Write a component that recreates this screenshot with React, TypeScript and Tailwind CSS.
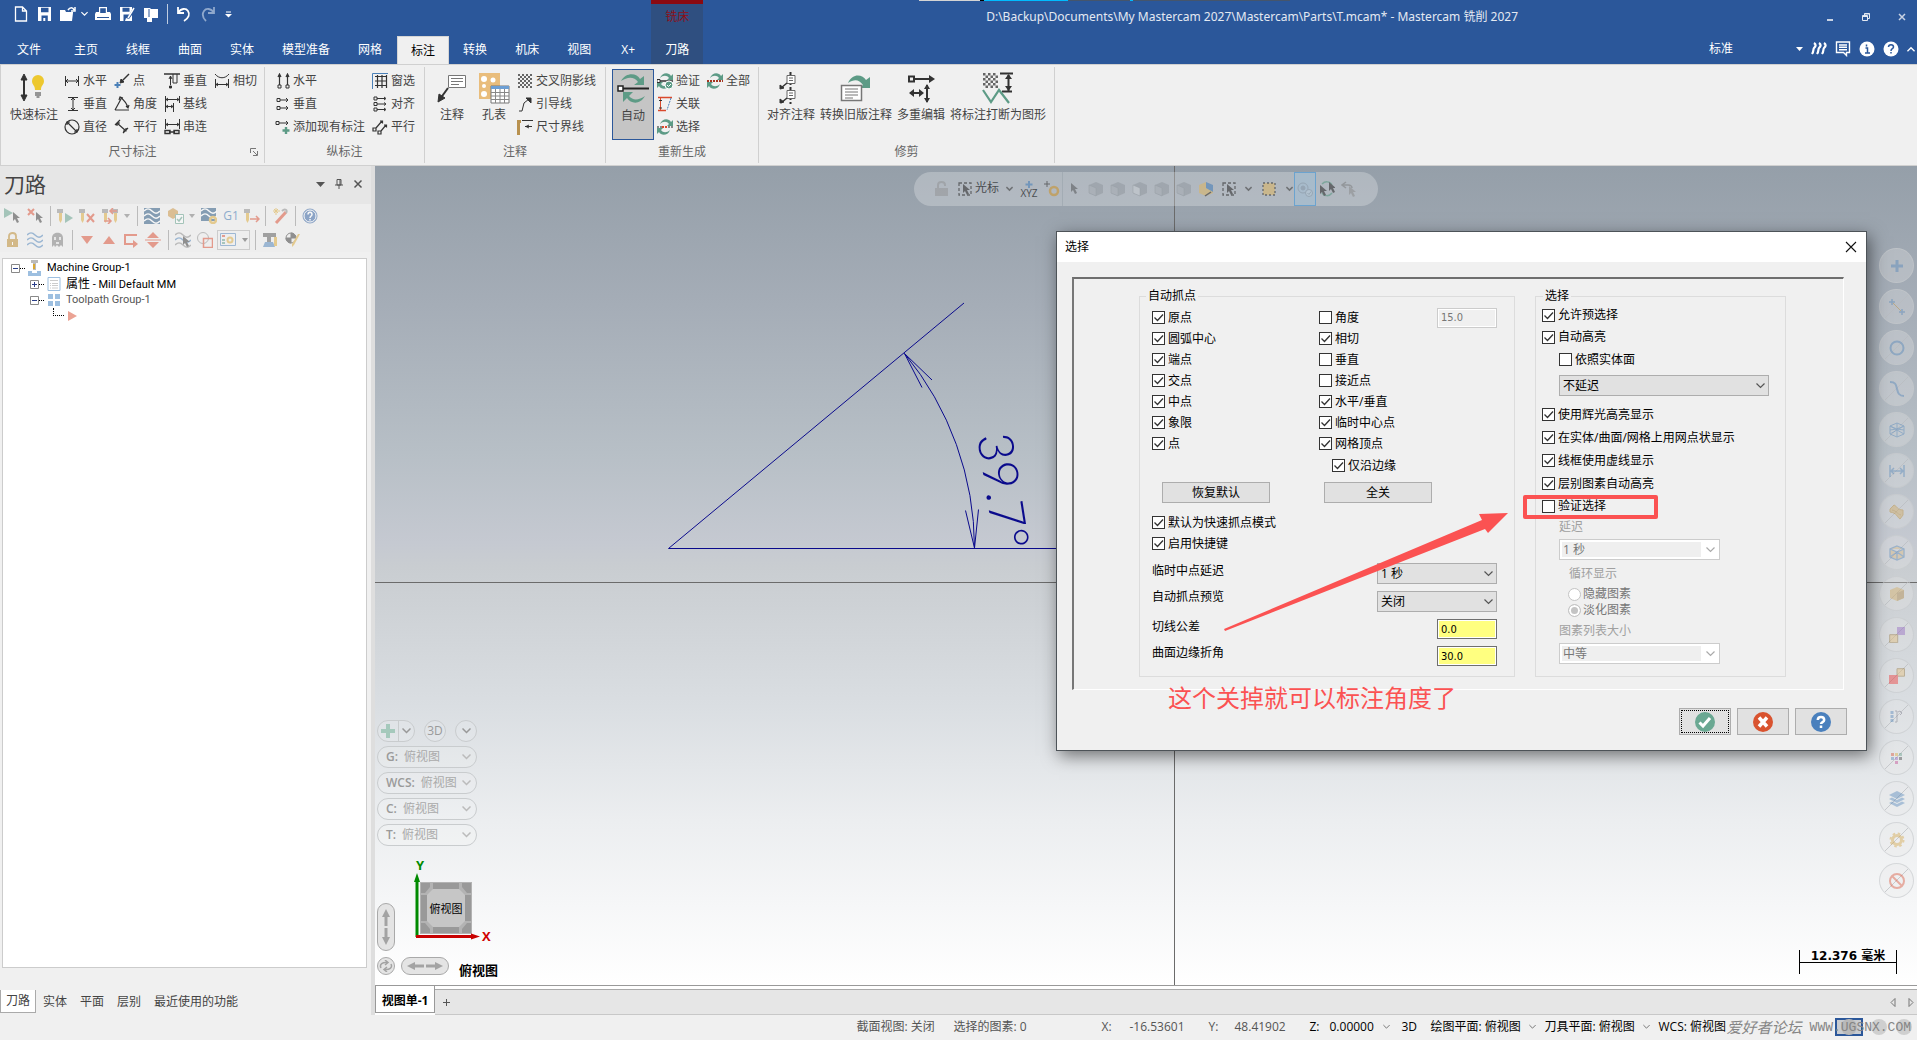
import React from 'react';

const K = '#333333';
const G = '#5d9b86';
const B = '#4a80b8';
const R = '#d9492c';
const T = '#e9bd7c';

type Kids = { children?: React.ReactNode };

function S({ w = 16, h = 16, s = K, sw = 1, className = '', children }: Kids & { w?: number; h?: number; s?: string; sw?: number; className?: string }) {
  return (
    <svg width={w} height={h} viewBox={`0 0 ${w} ${h}`} fill="none" stroke={s} strokeWidth={sw} className={'shrink-0 ' + className} aria-hidden="true">
      {children}
    </svg>
  );
}

function Chevron({ s = '#555', sw = 1, className = '' }: { s?: string; sw?: number; className?: string }) {
  return (
    <S w={9} h={6} s={s} sw={sw} className={className}>
      <path d="M.5 .5 4.5 4.5 8.500 .5" />
    </S>
  );
}

/* ---------- title bar ---------- */

function QuickAccess() {
  return (
    <div className="flex h-7 w-[240px] items-center pl-[9px]">
      <button className="flex w-6 justify-center" aria-label="新建"><S s="#fff" sw={1.3}><path d="M2.500 1h7L13.500 5v10h-11zM9.500 1v4h4" /></S></button>
      <button className="flex w-6 justify-center" aria-label="保存"><S s="none"><path fill="#fff" fillRule="evenodd" d="M1 1h13v14H1zM4 1.800v4.400h7.500V1.800zM4.500 9.500V15h1.800v-3h2v3h2.500V9.500z" /></S></button>
      <button className="flex w-[34px] items-center justify-center gap-1" aria-label="打开">
        <S w={17} s="none"><path fill="#fff" d="M0 4h5l1 2h7v1l-1 8H0z" /><path d="M8 4c2-3 5-3 6 0M15 1v4h-4" stroke="#fff" strokeWidth="1.500" /></S>
        <Chevron s="#fff" sw={1.500} className="w-[7px]" />
      </button>
      <button className="flex w-[24px] justify-center" aria-label="打印"><S s="none"><path fill="#fff" fillRule="evenodd" d="M4 1h8v5h3l1 2v6H0V8l1-2h3zM5.200 2.200V7h5.600V2.200zM2 11v1h12v-1z" /></S></button>
      <button className="flex w-6 justify-center" aria-label="另存为"><S s="none"><path fill="#fff" fillRule="evenodd" d="M1 1h12v3l-3 5v-.5H4.500V15H1zM3.500 1.800v4h7v-4zM7 12l-1 3h7V9l-3 4z" /><path d="m15 2-6 10" stroke="#fff" strokeWidth="1.500" /></S></button>
      <button className="flex w-6 justify-center" aria-label="压缩"><S s="none"><path fill="#fff" d="M1 2h6l1 1h7v9H9v4H4v-4H1z" /><path d="M5 4h2M5 6h2M5 8h2M5 10h2" stroke="#2b579a" /></S></button>
      <span className="mx-1 h-5 w-px bg-white/70" />
      <button className="flex w-6 justify-center" aria-label="撤消"><S s="#fff" sw={1.800}><path d="M2 1v6h6M2 7c3-5 8-5 10-2s1 7-4 10" /></S></button>
      <button className="flex w-6 justify-center" aria-label="重做"><S s="#8fa8cc" sw={1.800}><path d="M14 1v6H8M14 7C11 2 6 2 4 5s-1 7 2 10" /></S></button>
      <button className="flex w-4 justify-center" aria-label="自定义"><S w={7} h={7} s="#fff"><path d="M1 1h5" /><path d="M0 3h7L3.500 6.500z" fill="#fff" stroke="none" /></S></button>
    </div>
  );
}

function Header() {
  return (
    <header className="relative flex h-16 shrink-0 items-stretch bg-[#2b579a] text-white">
      <div className="absolute left-[919px] top-0 flex h-px w-[371px]">
        <span className="w-[61px] bg-neutral-300" /><span className="w-1 bg-black" /><span className="w-[84px] bg-sky-400" /><span className="w-[62px] bg-slate-600" /><span className="w-[3px] bg-sky-400" /><span className="flex-1 bg-slate-600" />
      </div>
      <div className="flex flex-col justify-between">
        <QuickAccess />
        <nav className="flex h-7 items-stretch">
          <button className="w-[60px] pr-[2px]">文件</button>
          {['主页', '线框', '曲面', '实体', '模型准备', '网格'].map((t) => <button key={t} className="px-[14px]">{t}</button>)}
          <button className="ml-px border border-b-0 border-[#d5d5d5] bg-[#f0f0f0] px-[13px] text-black">标注</button>
          {['转换', '机床', '视图'].map((t) => <button key={t} className="px-[14px]">{t}</button>)}
          <button className="w-[46px]">X+</button>
        </nav>
      </div>
      <div className="flex w-[52px] flex-col items-center justify-between border-t-4 border-[#8b0a10] bg-[#2f4f80]">
        <span className="pt-1 leading-[18px] text-[#8b0f18]">铣床</span>
        <button className="h-7">刀路</button>
      </div>
      <div className="flex-1 whitespace-pre pl-[283px] pt-2 font-[Noto_Sans,Noto_Sans_CJK_SC] leading-[18px] text-[#e4e9f2]">D:\Backup\Documents\My Mastercam 2027\Mastercam\Parts\T.mcam* - Mastercam 铣削 2027</div>
      <div className="flex flex-col justify-between">
        <div className="flex h-[34px] items-center justify-end gap-6 pr-[9px]">
          <button aria-label="最小化"><S w={12} h={12} s="#c9d3e4" sw={2}><path d="M3 9h6" /></S></button>
          <button aria-label="还原"><S w={12} h={12} s="#e4e9f2"><path d="M2.500 4.500h5v5h-5zM2.500 5.500h5M4.500 4V2.500h5v5H8M4.500 3h5" /></S></button>
          <button aria-label="关闭"><S w={12} h={12} s="#c9d3e4" sw={1.500}><path d="m3 3 6 6m0-6-6 6" /></S></button>
        </div>
        <div className="flex h-[30px] items-center pr-[2px]">
          <select aria-label="样式" className="w-[84px] appearance-none bg-transparent"><option>标准</option></select>
          <S w={7} h={4} s="none" className="ml-[3px] mr-[8px]"><path fill="#fff" d="M0 0h7L3.500 4z" /></S>
          <button className="w-6" aria-label="社区"><S s="#fff" sw={2.200}><path d="M3 2c3 2 1 4 0 5s0 3-2 6M8 2c3 2 1 4 0 5s0 3-2 6M13 2c3 2 1 4 0 5s0 3-2 6" /></S></button>
          <button className="w-6" aria-label="消息"><S s="#fff" sw={1.400}><path d="M1.500 1h13v10.500h-3v3l-3-3h-7zM4 4h8M4 6.300h8M4 8.700h8" /></S></button>
          <button className="w-6" aria-label="信息"><S><circle cx="8" cy="8" r="7.500" fill="#fff" stroke="none" /><path d="M6.500 7H8.500V12M6 12h5M7.500 3.500v2" stroke="#2b579a" strokeWidth="1.500" /></S></button>
          <button className="w-6" aria-label="帮助"><S><circle cx="8" cy="8" r="7.500" fill="#fff" stroke="none" /><path d="M5.500 6c0-3 5-3 5 0 0 2-2.500 1.500-2.500 4M8 11v1.500" stroke="#2b579a" strokeWidth="1.500" /></S></button>
          <button aria-label="折叠"><Chevron s="#fff" sw={1.500} className="w-[8px] rotate-180" /></button>
        </div>
      </div>
    </header>
  );
}

/* ---------- ribbon ---------- */

function Group({ label, launcher, className = '', children }: Kids & { label: string; launcher?: boolean; className?: string }) {
  return (
    <section className="my-[2px] flex flex-col border-r border-[#d0d0d0]">
      <div className={'flex h-[74px] pt-[2px] ' + className}>{children}</div>
      <div className="relative flex h-[22px] items-center justify-center text-[#666]">
        {label}
        {launcher && (
          <button className="absolute right-[6px] top-[7px]" aria-label="更多"><S w={8} h={8} s="#777"><path d="M.5 5V.5H6M3 3l4 4M7.500 3v4.500H3" /></S></button>
        )}
      </div>
    </section>
  );
}

function Item({ icon, text, className = 'w-[50px]' }: { icon: React.ReactNode; text: string; className?: string }) {
  return <button className={'flex h-[23px] items-center gap-[3px] whitespace-nowrap ' + className}>{icon}<span>{text}</span></button>;
}

function Big({ icon, text, className = '' }: { icon: React.ReactNode; text: string; className?: string }) {
  return (
    <button className={'flex h-[71px] flex-col items-center gap-px whitespace-nowrap pt-[3px] ' + className}>
      {icon}
      <span className="leading-5">{text}</span>
    </button>
  );
}

function Checker({ x = 0, y = 0, n = 7, size = 2 }: { x?: number; y?: number; n?: number; size?: number }) {
  const cells: React.ReactNode[] = [];
  for (let i = 0; i < n; i++) for (let j = 0; j < n; j++) if ((i + j) % 2 === 0) cells.push(<rect key={`${i}-${j}`} x={x + i * size} y={y + j * size} width={size} height={size} fill="#666" stroke="none" />);
  return <>{cells}</>;
}

const Swirl = () => (
  <g stroke="none" fill={G}>
    <path d="M3 5c2-6 9-6 11-2l2-2v6h-6l2-2C10 2 6 2 3 5z" />
    <path d="M13 11c-2 6-9 6-11 2l-2 2V9h6l-2 2c2 3 6 3 9 0z" />
  </g>
);

function Ribbon() {
  return (
    <div className="flex h-[102px] shrink-0 border border-r-0 border-[#d0d0d0] bg-[#f0f0f0] text-[#444]">
      <Group label="尺寸标注" launcher className="w-[263px] pl-[5px]">
        <Big text="快速标注" className="w-[56px]" icon={<S w={32} h={32}><path d="M6 4v23" strokeWidth="2" /><path d="M3 8 6 2l3 6zM3 23l3 6 3-6z" fill={K} /><path d="M14 9a6 6 0 0 1 12 0c0 4-3 4-3 9h-6c0-5-3-5-3-9z" fill="#edc82f" stroke="none" /><path d="M17 21h6M17 23h6M18.500 25h3" stroke="#777" strokeWidth="1.500" /></S>} />
        <div className="ml-[2px]">
          <Item text="水平" icon={<S><path d="M1.500 3v10M14.500 3v10M2 8h12M4 6 2 8l2 2M12 6l2 2-2 2" /></S>} />
          <Item text="垂直" icon={<S><path d="M4 1.500h10M4 14.500h10M9 2v12M7 4l2-2 2 2M7 12l2 2 2-2" /></S>} />
          <Item text="直径" icon={<S sw={1.200}><circle cx="8" cy="8" r="7" /><path d="m3 3 10 10M3 6V3h3M13 10v3h-3" /></S>} />
        </div>
        <div>
          <Item text="点" icon={<S><path d="M15 1 8 8" strokeWidth="1.500" /><path d="M6 10l1-4 3 3z" fill={K} /><path d="M3.500 9v6M.5 12h6" stroke={B} strokeWidth="2" /></S>} />
          <Item text="角度" icon={<S sw={1.200}><path d="M1 14 7 3M1 14h14M6 1c4 3 7 7 8 11M5 4l1-3 3 1M12 10l2 2 1-3" /></S>} />
          <Item text="平行" icon={<S sw={1.200}><path d="m1 6 5-5M9 14l5-5M3 4l9 8M3 7V4h3M12 9v3H9" /></S>} />
        </div>
        <div>
          <Item text="垂直" icon={<S><path d="M0 1h16" strokeWidth="1.500" /><path d="M6.500 3v9M6.500 3 5 6M6.500 3 8 6M9 1v9h4V1" /><path d="M5.500 13h2v2h-2z" fill={K} /></S>} />
          <Item text="基线" icon={<S><path d="M1.500 0v16M15.500 0v7M9.500 7v9M2 3.500h13M2 10.500h7M4 2 2 3.500 4 5M13 2l2 1.500L13 5M4 9l-2 1.500L4 12M7 9l2 1.500L7 12" /></S>} />
          <Item text="串连" icon={<S><path d="M1.500 0v10M15.500 0v10M2 5.500h13M4 4 2 5.500 4 7M13 4l2 1.500L13 7" /><path d="M1 11.500h5v3H1zM10 11.500h5v3h-5zM5 13h6" strokeWidth="1.400" /></S>} />
        </div>
        <Item text="相切" icon={<S><path d="M1.500 6v9M14.500 6v9M2 11.500h12M4 10l-2 1.500L4 13M12 10l2 1.500-2 1.500M1 1c4 5 10 5 14 0" /></S>} />
      </Group>
      <Group label="纵标注" className="w-[159px] pl-[10px]">
        <div>
          <Item className="w-[97px]" text="水平" icon={<S className="-mr-px"><path d="M4.500 12V2M3 4l1.500-3L6 4M12.500 12V2M11 4l1.500-3L14 4" strokeWidth="1.200" /><path d="M3 12h3v3H3zM11 12h3v3h-3z" /></S>} />
          <Item className="w-[97px]" text="垂直" icon={<S className="-mr-px"><path d="M2 2.500h3v3H2zM2 10.500h3v3H2zM5 4h8M5 12h8M11 2l2 2-2 2M11 10l2 2-2 2" /></S>} />
          <Item className="w-[97px]" text="添加现有标注" icon={<S className="-mr-px"><path d="M1 2.500h3v3H1zM4 4h9M11 2l2 2-2 2" /><path d="M11 8v7M7.500 11.500h7" stroke={G} strokeWidth="2.400" /></S>} />
        </div>
        <div>
          <Item text="窗选" icon={<S><path d="M.5 16V.5H16" stroke={B} /><path d="M3 3.500h12M3 8h12M3 12.500h12M5.500 2v13M10 2v13M14.500 2v13" strokeWidth="1.200" /></S>} />
          <Item text="对齐" icon={<S><path d="M2 1h3v3H2zM2 6.500h3v3H2zM2 12h3v3H2zM5 2.500h8M5 8h8M5 13.500h8M12 1l2 1.500L12 4M12 6.500 14 8l-2 1.500M12 12l2 1.500-2 1.500" /></S>} />
          <Item text="平行" icon={<S><path d="M1 9h3v3H1zM6 12h3v3H6zM4 9l6-7M9 12l5-6M8 2h2.500v2.500M12 6h2.500v2.500" strokeWidth="1.200" /></S>} />
        </div>
      </Group>
      <Group label="注释" className="w-[180px] pl-[6px]">
        <Big text="注释" className="w-[42px]" icon={<S w={32} h={32}><path d="M12.500 3.500h17v12h-17z" fill="#fff" stroke="#777" /><path d="M15 6.500h12M15 9.500h12M15 12.500h8" stroke="#777" /><path d="M12 16 4 27" strokeWidth="2" /><path d="M2 30l1-8 6 4z" fill={K} /></S>} />
        <Big text="孔表" className="w-[42px]" icon={<S w={32} h={32} s="none"><path d="M1 1h21v26H1z" fill={T} /><circle cx="6" cy="7" r="3" fill="#fff" /><circle cx="15" cy="8" r="2.500" fill="#fff" /><circle cx="6" cy="14" r="2" fill="#fff" /><circle cx="6" cy="22" r="3" fill="#fff" /><path d="M13 14h18v17H13z" fill="#fff" stroke="#777" /><path d="M13 14h18v3H13z" fill="#6d9fd4" /><path d="M13 20.500h18M13 24h18M13 27.500h18M17.500 17v14M22 17v14M26.500 17v14" stroke="#888" /></S>} />
        <div className="ml-[2px]">
          <Item className="" text="交叉阴影线" icon={<S><Checker x={1} y={1} /></S>} />
          <Item className="" text="引导线" icon={<S><path d="M2 15h3L7 7l5-4" /><path d="M9 2h5v5z" fill={K} /></S>} />
          <Item className="" text="尺寸界线" icon={<S><path d="M0 2.500h4M1.500 1v15" stroke="#b8914f" strokeWidth="3" /><path d="M5 1.500h11M8 7.500h7M12 6l-3 1.500L12 9" /></S>} />
        </div>
      </Group>
      <Group label="重新生成" className="w-[152px] pl-[6px]">
        <Big text="自动" className="w-[42px] border border-[#2b579a] bg-[#c5c5c5]" icon={<S w={32} h={32} s="none"><path fill={G} d="M4 8C9-1 20 0 23 6l4-3v9H17l4-3C17 3 10 4 4 8zM28 23c-5 9-14 8-18 2l-4 4v-10h10l-4 4c4 5 10 4 16 0z" /><path d="M5 15.500h27" stroke="#222" strokeWidth="2" /><path d="M1 13h5v5H1z" fill="#fff" stroke="#222" strokeWidth="1.500" /></S>} />
        <div className="ml-[3px]">
          <Item text="验证" icon={<S><Swirl /><path d="M0 8h16" strokeWidth="1.500" /><path d="M0 6.500h3v3H0z" fill="#fff" /><circle cx="12" cy="12" r="4" fill={G} stroke="#fff" /><path d="m10 12 1.500 1.500L14 11" stroke="#fff" /></S>} />
          <Item text="关联" icon={<S><path d="M1 1.500h14M1 14.500h8" stroke={R} strokeWidth="1.500" /><path d="M3.500 2v12" stroke={R} /><path d="M2 4.500h3M2 12h3" /><path d="m14 2-4 12" stroke={B} strokeDasharray="2 1" /></S>} />
          <Item text="选择" icon={<S><Swirl /><path d="M0 8h5M11 8h5" stroke="#888" strokeWidth="2" strokeDasharray="2 1" /><path d="M5 8h6" stroke={R} strokeWidth="2" strokeDasharray="2 1" /></S>} />
        </div>
        <Item text="全部" className="" icon={<S><Swirl /><path d="M0 8h16" stroke="#a5351f" strokeWidth="2" strokeDasharray="2 1" /></S>} />
      </Group>
      <Group label="修剪" className="gap-[5px] px-[8px]">
        <Big text="对齐注释" icon={<S w={32} h={32}><path d="M15.500 0v32" strokeDasharray="3 2" strokeWidth="2" /><path d="M12 3.500h8v8h-8zM12 18.500h8v8h-8z" fill="#fff" stroke="#666" /><path d="M14 6h4M14 8.500h4M14 21h4M14 23.500h4" stroke="#666" /><path d="m12 11-6 5M12 26l-6 5" strokeWidth="1.500" /><path d="M5 17v-4l4 3zM5 31v-4l4 3z" fill={K} /></S>} />
        <Big text="转换旧版注释" icon={<S w={32} h={32}><path d="M8 11c5-11 15-8 18-3l4-3v11H19l4-3c-4-6-9-6-15-2z" fill={G} stroke="none" /><path d="M1.500 13.500h20v15h-20z" fill="#fff" stroke="#777" strokeWidth="1.500" /><path d="M5 17h13M5 20h13M5 23h13M5 26h8" stroke="#777" /></S>} />
        <Big text="多重编辑" icon={<S w={32} h={32}><path d="M4 4.500h5v5H4zM9 7h16M5 21h12M22 13v17" strokeWidth="2" /><path d="m24 3 6 4-6 4zM9 17l-5 4 5 4zM14 17l5 4-5 4zM19 17l3-5 3 5zM19 26l3 5 3-5z" fill={K} stroke="none" /></S>} />
        <Big text="将标注打断为图形" icon={<S w={32} h={32}><Checker x={1} y={1} n={6} size={2.500} /><path d="M18 1.500h13M20 19.500h10M26.500 3v16" strokeWidth="2" /><path d="m23 7 3.500-5L30 7zM23 14l3.500 5 3.500-5z" fill={K} stroke="none" /><path d="m1 18 8 12 8-12 10 13" stroke={G} strokeWidth="2.200" /></S>} />
      </Group>
    </div>
  );
}

/* ---------- toolpath panel ---------- */

const Sep = () => <span className="h-5 w-px shrink-0 bg-[#bbb]" />;
const Caret = () => <S w={6} h={4} s="none"><path d="M0 0h6L3 4z" fill="#888" /></S>;
const Cur = ({ x = 0, y = 0, c = '#333' }: { x?: number; y?: number; c?: string }) => <path transform={`translate(${x} ${y})`} d="M0 0v9l2-2 2 4 2-1-2-4h3z" fill={c} stroke="none" />;
const Mill = ({ x = 0 }: { x?: number }) => <g transform={`translate(${x} 0)`} stroke="none"><path d="M0 1h6v4H0z" fill="#888" /><path d="M2 5h3v7l-1.500 3L2 12z" fill="#dba832" /></g>;
const Wave = ({ c = B, y = 0 }: { c?: string; y?: number }) => <path d={`M0 ${y + 3}c3-3 5-3 8 0s5 3 8 0`} stroke={c} strokeWidth="1.500" />;

function Tool({ label, w = 'w-[22px]', children }: Kids & { label: string; w?: string }) {
  return <button aria-label={label} className={'flex shrink-0 items-center justify-center opacity-50 ' + w}>{children}</button>;
}

function PanelTools() {
  return (
    <div className="flex h-12 flex-col bg-[#eeeeee]">
      <div className="flex h-6 items-center">
        <Tool label="选择全部" w="w-6"><S><path d="m0 0 9 5-9 5z" fill={G} stroke="none" /><Cur x={9} y={4} /></S></Tool>
        <Tool label="取消选择"><S><path d="m1 1 6 6m0-6L1 7" stroke={R} strokeWidth="2" /><Cur x={9} y={4} /></S></Tool>
        <span className="w-[4px]" /><Sep /><span className="w-[3px]" />
        <Tool label="重新生成"><S><Mill /><path d="m8 5 8 5-8 5z" fill={G} stroke="none" /></S></Tool>
        <Tool label="删除"><S><Mill /><path d="m8 6 7 8m0-8-7 8" stroke={R} strokeWidth="2" /></S></Tool>
        <Tool label="移动" w="w-[24px]"><S><Mill /><Mill x={10} /><path d="M15 3H8m3-3L8 3l3 3M2 13h7m-3-3 3 3-3 3" stroke={R} strokeWidth="1.500" /></S></Tool>
        <span className="ml-[2px] opacity-60"><Caret /></span>
        <span className="w-[7px]" /><Sep /><span className="w-[3px]" />
        <Tool label="路径显示"><S><path d="M0 0h16v16H0z" fill="#1f4f7a" stroke="none" /><Wave c="#fff" y={0} /><Wave c="#fff" y={5} /><Wave c="#fff" y={10} /></S></Tool>
        <Tool label="验证" w="w-[26px]"><S><path d="M0 3 5 0l5 3v5l-5 3-5-3z" fill="#c98f3a" stroke="none" /><path d="M7.500 6.500h8v9h-8z" fill="#fff" stroke={G} /><path d="m9 11 2 2 3-4" stroke={G} strokeWidth="1.500" /></S></Tool>
        <span className="opacity-60"><Caret /></span>
        <Tool label="模拟" w="w-[28px]"><S><path d="M0 0h15v13H0z" fill="#1f4f7a" stroke="none" /><Wave c="#fff" /><Wave c="#fff" y={5} /><circle cx="12" cy="12" r="3" stroke="#dba832" strokeWidth="2.500" /></S></Tool>
        <Tool label="后处理" w="w-[16px]"><span className="text-[#2d6cae]">G1</span></Tool>
        <Tool label="进给" w="w-[26px]"><S><Mill /><path d="M6 11h9m-3-3 3 3-3 3" stroke={R} strokeWidth="1.500" /></S></Tool>
        <Sep /><span className="w-[4px]" />
        <Tool label="向导"><S><path d="M3 15 13 4" stroke={R} strokeWidth="3" /><path d="M9 3c3-3 6-1 4 2" stroke="#888" strokeWidth="2" /><path d="M3 0v7M0 3h7M1 1l4 4M5 1 1 5" stroke="#dba832" /></S></Tool>
        <span className="w-[3px]" /><Sep /><span className="w-[3px]" />
        <Tool label="帮助"><S><circle cx="8" cy="8" r="7" fill="#2d5da0" stroke="#2d5da0" /><circle cx="8" cy="8" r="6" stroke="#fff" /><path d="M6 6.500c0-3 4-3 4 0 0 1.500-2 1.500-2 3.500M8 11v1.500" stroke="#fff" strokeWidth="1.500" /></S></Tool>
      </div>
      <div className="flex h-6 items-center">
        <Tool label="锁定" w="w-6"><S><path d="M3 7h11v8H3z" fill="#b98524" stroke="none" /><path d="M5 7V4c0-4 7-4 7 0v3" stroke="#b98524" strokeWidth="1.800" /><path d="M8.500 10v3" stroke="#fff" /></S></Tool>
        <Tool label="切换显示"><S><Wave y={0} /><Wave y={5} /><Wave y={10} /></S></Tool>
        <Tool label="虚拟"><S><path d="M3 15V6c0-7 11-7 11 0v9l-2-2-2 2-2-2-2 2-1-2z" fill="#777" stroke="none" /><path d="M6 5v3M11 5v3M7 11h3" stroke="#fff" strokeWidth="1.500" /></S></Tool>
        <span className="w-[4px]" /><Sep /><span className="w-[3px]" />
        <Tool label="下移"><S w={12} s="none"><path d="M0 4h12L6 12z" fill={R} /></S></Tool>
        <Tool label="上移"><S w={12} s="none"><path d="M0 12h12L6 4z" fill={R} /></S></Tool>
        <Tool label="插入"><S s={R} sw={2}><path d="M14 3H2v9h9" /><path d="m10 8 5 4-5 4z" fill={R} stroke="none" /></S></Tool>
        <Tool label="滚动"><S s="none"><path d="M2 6h12L8 0zM2 10h12l-6 6z" fill={R} /><path d="M0 8h16" stroke={R} /></S></Tool>
        <span className="w-[4px]" /><Sep /><span className="w-[3px]" />
        <Tool label="单一显示"><S><Wave c="#888" y={0} /><Wave c={B} y={5} /><Wave c="#888" y={10} /><Cur x={8} y={4} /></S></Tool>
        <Tool label="关联显示"><S><circle cx="6" cy="6" r="5.500" stroke="#888" /><path d="M6.500 6.500h9v9h-9z" stroke={R} strokeWidth="1.500" /></S></Tool>
        <button aria-label="显示选项" className="mx-[1px] flex h-5 w-[33px] items-center justify-center gap-[6px] border border-[#c4c4c4] opacity-80">
          <S className="opacity-60"><path d="M.5 1.500h15v12H.5z" stroke={B} /><path d="M2 4h3" stroke={R} strokeWidth="2" /><path d="M2 8h3M2 11h3" stroke={G} strokeWidth="2" /><circle cx="10" cy="8" r="2.500" stroke="#dba832" strokeWidth="2" /></S>
          <Caret />
        </button>
        <span className="w-[4px]" /><Sep /><span className="w-[3px]" />
        <Tool label="机床"><S><path d="M1 1h13v4H1zM5 5h4v5H5z" fill="#555" stroke="none" /><path d="M3 10h8l2 5H1z" fill={B} stroke="none" /><path d="M12 5h3v9h-3z" fill="#dba832" stroke="none" /></S></Tool>
        <Tool label="编辑" w="w-[24px]"><S><circle cx="6" cy="6" r="5" /><path d="M6 1a5 5 0 0 1 5 5H1a5 5 0 0 0 5 5z" fill={K} /><path d="m15 2-6 11-2 2v-3l6-10z" fill="#dba832" stroke="none" /></S></Tool>
      </div>
    </div>
  );
}

const Box = ({ plus }: { plus?: boolean }) => (
  <S w={9} h={9} s="#888"><path d="M.5 .5h8v8h-8z" fill="#fff" /><path d={plus ? 'M2 4.500h5M4.500 2v5' : 'M2 4.500h5'} stroke="#2b3f8a" /></S>
);
const Dots = () => <span className="w-[5px] border-t border-dotted border-black" />;

function ToolpathPanel() {
  return (
    <aside className="flex w-[375px] shrink-0 flex-col border-r-4 border-[#dedede] bg-[#f0f0f0]">
      <div className="flex h-[38px] shrink-0 items-center bg-[#e6e6e6] pb-[2px] pl-1 pr-[8px]">
        <h2 className="flex-1 text-[21px] text-[#444]">刀路</h2>
        <div className="flex items-center gap-[9px]">
          <button aria-label="选项"><S w={9} h={5} s="none"><path d="M0 0h9L4.500 5z" fill="#555" /></S></button>
          <button aria-label="固定"><S w={10} h={10} s="#555"><path d="M3 .5h4V6H3zM6 .5V6M1 6h8M5 6v4" /></S></button>
          <button aria-label="关闭面板"><S w={10} h={10} s="#555" sw={1.500}><path d="m1.500 1.500 7 7m0-7-7 7" /></S></button>
        </div>
      </div>
      <PanelTools />
      <div className="ml-[2px] mr-1 mt-[6px] flex-1 border border-[#ccc] bg-white pl-2 pt-[1px] font-[Roboto,Noto_Sans_CJK_SC] text-[11px] text-black">
        <div className="flex h-4 items-center"><Box /><Dots /><S className="ml-[2px]" s="none"><path d="M4 0h7v3H4zM6 3h3v7H6z" fill="#bbb" /><path d="M6 4h2v5H6z" fill="#dba832" /><path d="M1 11h4v2h5v-2h4v5H1z" fill="#9dbfe0" /></S><span className="ml-[4px]">Machine Group-1</span></div>
        <div className="flex h-4 items-center pl-[19px]"><Box plus /><Dots /><S className="ml-[2px]" s="#9dbfe0"><path d="M2 1.500h12v13H2z" /><path d="M4 4.500h8M4 7.500h1M6 7.500h6M4 9.500h1M6 9.500h6M4 12h1M6 12h6" stroke="#ccc" /></S><span className="ml-[4px]"><span className="text-[12px]">属性</span> - Mill Default MM</span></div>
        <div className="flex h-4 items-center pl-[19px] text-[#555]"><Box /><Dots /><S className="ml-[2px]" s="none"><path d="M2 2h5v5H2zM9 2h5v5H9zM2 9h5v5H2zM9 9h5v5H9z" fill="#9dbfe0" /></S><span className="ml-[4px]">Toolpath Group-1</span></div>
        <div className="flex h-4 items-center pl-[42px]"><span className="mb-2 h-2 w-[11px] border-b border-l border-dotted border-black" /><S w={9} h={10} s="none" className="ml-1"><path d="m0 0 9 5-9 5z" fill="#eba394" /></S></div>
      </div>
      <div className="mb-[2px] mt-[22px] flex h-[23px] shrink-0 gap-px text-[#444]">
        <button className="w-[36px] border border-t-0 border-[#aaa] bg-white">刀路</button>
        {['实体', '平面', '层别', '最近使用的功能'].map((t) => <button key={t} className="px-[6px]">{t}</button>)}
      </div>
    </aside>
  );
}

/* ---------- viewport ---------- */

function Drawing() {
  return (
    <svg className="absolute inset-0 h-full w-full" fill="none" aria-hidden="true">
      <path d="M799.500 0V820M0 416.500H1900" stroke="#6b6b6b" />
      <g stroke="#0a0a8c" strokeWidth="1">
        <path d="M293.500 382.500 589 137M293.500 382.500H682" />
        <path d="M529.500 187.500A306 306 0 0 1 599.500 382" />
        <path d="M547 221.500 529.500 187.500 557 214M590.500 344.500 599.500 382 603.500 343.500" />
      </g>
      <text transform="translate(602 270) rotate(81)" className="fill-[#0a0a8c] font-[Lato] text-[49px] font-light">39.7°</text>
    </svg>
  );
}

const Cube = ({ face }: { face?: string }) => (
  <S><path d="M8 1 15 4v8l-7 3-7-3V4z" fill="#8f969d" stroke="none" /><path d="M1 4l7 3v8l-7-3z" fill={face ?? '#a3a9b0'} stroke="#7d848b" strokeWidth=".5" /></S>
);

function SelectionBar() {
  const dash = <path d="M1 2h12v12H1z" strokeDasharray="3 2" strokeWidth="1.300" />;
  return (
    <div className="absolute inset-x-0 top-[6px] flex justify-center">
      <div className="flex h-[34px] items-center rounded-full bg-white/25 pl-[20px] pr-[18px]">
        <button className="w-[24px] opacity-40" aria-label="锁定抓点"><S><path d="M1 7h13v8H1z" fill="#888" stroke="none" /><path d="M4 7V4c0-4 7-4 7 0v1" stroke="#888" strokeWidth="2" /></S></button>
        <button className="flex w-[44px] items-center gap-px opacity-60"><S>{dash}<Cur x={5} y={3} /></S><span className="pb-[2px]">光标</span></button>
        <button className="flex w-[15px] justify-center opacity-60" aria-label="光标选项"><Chevron s="#444" sw={2} className="w-[7px]" /></button>
        <button className="flex w-6 flex-col items-center leading-none opacity-60" aria-label="XYZ"><S w={8} h={7} s={B} sw={2}><path d="M4 0v7M.5 3.500h7" /></S><span className="text-[10px] font-medium leading-[10px]">XYZ</span></button>
        <button className="flex w-[21px] justify-center opacity-60" aria-label="抓点设置"><S><path d="M3 0v6M0 3h6" /><circle cx="10" cy="10" r="4" stroke="#c99432" strokeWidth="2.500" /></S></button>
        <span className="h-[34px] w-px bg-[#9aa3ac]/60" />
        <button className="flex w-[22px] justify-center opacity-40" aria-label="选择"><S><Cur x={5} y={2} /></S></button>
        {['验证实体', '边缘', '面', '实体', '背面'].map((t, i) => <button key={t} aria-label={t} className="flex w-[22px] justify-center opacity-50"><Cube face={i === 2 ? '#c9ced3' : undefined} /></button>)}
        <button className="flex w-[22px] justify-center opacity-60" aria-label="颜色"><S s="none"><path d="M1 4 8 1v6l7 3v2l-7 3-7-3z" fill="#d9b66a" /><path d="m8 1 7 3v7L8 7z" fill={B} /><path d="m7 15 6-4" stroke={K} strokeWidth="1.500" /></S></button>
        <button className="flex w-[26px] justify-center opacity-60" aria-label="选择方式"><S>{dash}<Cur x={5} y={3} /></S></button>
        <button className="flex w-[11px] justify-center opacity-60" aria-label="更多方式"><Chevron s="#444" sw={2} className="w-[7px]" /></button>
        <button className="flex w-[30px] justify-center opacity-60" aria-label="窗选"><S><path d="M2 2h12v12H2z" fill="#d9b66a" strokeDasharray="2 2" strokeWidth="1.300" /></S></button>
        <button className="flex w-[10px] justify-center opacity-60" aria-label="窗选选项"><Chevron s="#444" sw={2} className="w-[7px]" /></button>
        <button className="flex h-[34px] w-[22px] items-center justify-center border border-[#6ba3cf] bg-[#9dbdd6]/50" aria-label="验证选择"><S s="#8b98a5" className="opacity-60"><circle cx="6" cy="7" r="5" /><circle cx="6" cy="7" r="2" fill="#8b98a5" /><circle cx="12" cy="12" r="3.500" fill="#b9c8d4" /><path d="m10.500 12 1.500 1.500 2-3" /></S></button>
        <button className="flex w-[22px] justify-center opacity-60" aria-label="反选"><S><path d="M3 3c3-3 8-3 10 1M13 12c-3 4-8 3-10 0" stroke={G} strokeWidth="1.500" /><Cur x={10} y={1} /><Cur x={1} y={4} /></S></button>
        <button className="flex w-[22px] justify-center opacity-50" aria-label="上次选择"><S s="#777"><path d="M5 1 1 4l4 3M1 4h6c3 0 4 2 4 3" strokeWidth="1.500" /><Cur x={8} y={5} c="#888" /></S></button>
      </div>
    </div>
  );
}

const quick: [string, React.ReactNode][] = [
  ['点', <path key="a" d="M8 2v12M2 8h12" stroke={B} strokeWidth="3" />],
  ['线', <g key="a"><path d="M3 0v6M0 3h6M13 10v6M10 13h6" stroke={B} strokeWidth="1.500" /><path d="m4 4 8 8" stroke="#b98524" /></g>],
  ['圆', <circle key="a" cx="8" cy="8" r="6.500" stroke={B} strokeWidth="2" />],
  ['曲线', <path key="a" d="M1 1c6 0 6 3 7 7s2 7 7 7" stroke={B} strokeWidth="2" />],
  ['网格', <path key="a" d="M1 4l7-3 7 3v8l-7 3-7-3zM1 4l7 3 7-3M8 1v14M1 12l14-8M1 4l14 8M1 8l7-1 7 1" stroke={B} />],
  ['标注', <path key="a" d="M1 2v12M15 2v12M2 8h12M5 5 2 8l3 3M11 5l3 3-3 3" stroke={B} strokeWidth="1.500" />],
  ['曲面', <path key="a" d="M1 5l4-4c3 1 3 5 9 5v5l-3 4C8 13 8 9 1 8zM3 6c5 1 5 4 9 5" fill="#d3a858" stroke="#b98524" />],
  ['实体网格', <path key="a" d="M8 1 15 4v8l-7 3-7-3V4zM1 4l7 3 7-3M8 7v8M1 12l7-5 7 5" fill="#d9b679" stroke={B} strokeWidth="1.300" />],
  ['实体', <g key="a" stroke="none"><path d="M8 1 15 4v8l-7 3-7-3V4z" fill="#d3a858" /><path d="M8 7 15 4v8l-7 3z" fill="#a9803a" /></g>],
  ['颜色一', <g key="a"><path d="M8 0h8v8H8z" fill="#8e5fc0" stroke="none" /><path d="M.7 7.700h8v8h-8z" fill="#e6bd73" stroke="#8a6a2c" /></g>],
  ['颜色二', <g key="a"><path d="M8 .7h7.500v7.500H8z" fill="#e6bd73" stroke="#8a6a2c" /><path d="M0 7h9v9H0z" fill="#f02828" stroke="none" /></g>],
  ['平面', <g key="a"><path d="M3 2v12" stroke={B} strokeWidth="3" strokeDasharray="3 1" /><path d="M6 2h2v11H6M9 3l2-1 2 2-2 2" stroke="#667" /></g>],
  ['调色板', <g key="a" stroke="none"><path d="M2 3h3v3H2z" fill={R} /><path d="M6 3h3v3H6z" fill="#dba832" /><path d="M10 3h3v3h-3z" fill={G} /><path d="M2 7h3v3H2z" fill={B} /><path d="M6 7h3v3H6z" fill="#8e5fc0" /><path d="M10 7h3v3h-3z" fill={K} /><path d="M6 11h3v3H6z" fill="#c0398c" /></g>],
  ['层别', <path key="a" d="m8 0 8 4-8 4-8-4zM0 8l3-1.500 5 2.500 5-2.500L16 8l-8 4zM0 12l3-1.500L8 13l5-2.500 3 1.500-8 4z" fill={B} stroke="none" />],
  ['设置', <g key="a" stroke="#d3a03a"><circle cx="8" cy="8" r="4.500" strokeWidth="3" /><circle cx="8" cy="8" r="6.500" strokeWidth="2" strokeDasharray="2.500 2.600" /></g>],
  ['禁止', <g key="a" stroke={R} strokeWidth="2"><circle cx="8" cy="8" r="7" /><path d="m3 3 10 10" /></g>],
];

function QuickMasks() {
  return (
    <div className="absolute right-[3px] top-[82px] flex flex-col gap-[6px]">
      {quick.map(([label, art]) => (
        <button key={label} aria-label={label} className="relative flex size-[35px] items-center justify-center rounded-full border border-[#c3c6ca]/60 bg-[#e8e8e8]/30">
          <S w={35} h={35} s="#b9bcc0" className="absolute -left-px -top-px opacity-70"><path d="M6 29 29 6" /></S>
          <S className="opacity-40">{art}</S>
        </button>
      ))}
    </div>
  );
}

function ViewControls() {
  const pill = 'flex h-[22px] items-center rounded-full border border-[#c9ccce] bg-white/10 text-[#9a9a9a]';
  return (
    <div className="absolute bottom-[10px] left-[2px] flex flex-col">
      <div className="mb-1 flex gap-[9px]">
        <div className={pill + ' w-[38px]'}>
          <button aria-label="添加视图" className="flex h-full w-[21px] items-center justify-center border-r border-[#c9ccce]"><S w={14} h={14} s="#a5c9bc" sw={4}><path d="M7 0v14M0 7h14" /></S></button>
          <button aria-label="视图选项" className="flex flex-1 justify-center"><Chevron s="#999" sw={1.500} /></button>
        </div>
        <button className={pill + ' w-[22px] justify-center'}>3D</button>
        <button aria-label="更多" className={pill + ' w-[22px] justify-center'}><Chevron s="#999" sw={1.500} /></button>
      </div>
      <div className="flex w-[100px] flex-col gap-1">
        {['G', 'WCS', 'C', 'T'].map((p) => (
          <button key={p} className={pill + ' pl-2 pr-[5px]'}><b className="mr-[6px] font-semibold">{p}:</b><span className="flex-1 text-left text-[#aaa]">俯视图</span><Chevron s="#bbb" sw={1.500} /></button>
        ))}
      </div>
      <div className="flex h-[129px]">
        <div className="flex w-[18px] flex-col justify-end gap-[6px]">
          <button aria-label="垂直旋转" className="flex h-12 justify-center rounded-full border border-[#a9a9a9] bg-[#e4e4e4]"><S w={10} h={46} s="#a3a3a3" sw={3}><path d="M5 10v12M5 24v12" /><path d="m1 13 4-8 4 8zM1 33l4 8 4-8z" fill="#a3a3a3" stroke="none" /></S></button>
          <button aria-label="旋转" className="flex h-[18px] items-center justify-center rounded-full border border-[#a9a9a9] bg-[#e4e4e4]"><S w={14} h={12} s="#a3a3a3" sw={1.500}><path d="M2 8C0 4 4 2 8 2.500M12 4c2 4-2 6-6 5.500M6 0l3 2.500L6 5M8 7 5 9.500 8 12" /></S></button>
        </div>
        <div className="flex flex-1 flex-col justify-end pl-[6px]">
          <svg width="88" height="94" viewBox="0 -8 88 94" className="ml-[6px] overflow-visible" aria-label="视角">
            <text x="9" y="9" className="fill-[#008a00] text-[13px] font-bold">Y</text>
            <path d="M13 21h52v52H13z" fill="#b3b3b3" />
            <path d="M26 22h26v6H26zM26 66h26v6H26zM14 34h6v26h-6zM58 34h6v26h-6zM14 22h9v4l-5 6h-4zM55 22h9v10h-4l-5-6zM14 62h4l5 6v4h-9zM60 62h4v10h-9v-4z" fill="#999" />
            <path d="M26 28h26l6 6v26l-6 6H26l-6-6V34z" fill="#c6c6c6" />
            <text x="39" y="52" textAnchor="middle" className="fill-black text-[11px]">俯视图</text>
            <path d="M10 76V19" stroke="#008a00" strokeWidth="3" /><path d="m7 21 3-9 3 9z" fill="#008a00" />
            <path d="M9 75.500h56" stroke="#c80000" strokeWidth="3" /><path d="m64 72.500 9 3-9 3z" fill="#c80000" />
            <text x="75" y="80" className="fill-[#d00000] text-[13px] font-bold">X</text>
          </svg>
          <div className="mt-[10px] flex h-[18px] items-center">
            <button aria-label="水平旋转" className="flex h-[18px] w-12 items-center justify-center rounded-full border border-[#a9a9a9] bg-[#e4e4e4]"><S w={46} h={10} s="#a3a3a3" sw={3}><path d="M10 5h12M24 5h12" /><path d="m13 1-8 4 8 4zM33 1l8 4-8 4z" fill="#a3a3a3" stroke="none" /></S></button>
            <b className="ml-[10px] whitespace-nowrap pt-2 text-[13px] text-black">俯视图</b>
          </div>
        </div>
      </div>
    </div>
  );
}

/* ---------- dialog ---------- */

function Check({ label, on, className = 'h-[21px]' }: { label: string; on?: boolean; className?: string }) {
  return (
    <label className={'flex items-center gap-[3px] whitespace-nowrap ' + className}>
      <span className="grid size-[13px]">
        <input type="checkbox" defaultChecked={on} className="peer col-start-1 row-start-1 size-[13px] appearance-none border border-[#333] bg-white" />
        <svg viewBox="0 0 13 13" className="pointer-events-none invisible col-start-1 row-start-1 size-[13px] peer-checked:visible" fill="none" stroke="#333" strokeWidth="1.300"><path d="m2.500 6.500 3 3 5.500-6" /></svg>
      </span>
      {label}
    </label>
  );
}

function Drop({ id, value, disabled, className }: { id: string; value: string; disabled?: boolean; className: string }) {
  return (
    <div className={'grid h-[21px] ' + className}>
      <select id={id} aria-label={value} disabled={disabled} className={'col-start-1 row-start-1 h-[21px] w-full appearance-none border pl-[3px] opacity-100 ' + (disabled ? 'border-[#ccc] bg-[#efefef] text-[#777] outline-2 -outline-offset-3 outline-white' : 'border-[#adadad] bg-[#e1e1e1]')}><option>{value}</option></select>
      <span className={'pointer-events-none col-start-1 row-start-1 my-px mr-px flex items-center justify-center self-stretch justify-self-end ' + (disabled ? 'w-[18px] bg-white' : 'w-[16px]')}><Chevron s={disabled ? '#aaa' : '#555'} sw={1.200} /></span>
    </div>
  );
}

function SelectionDialog() {
  const field = 'h-5 w-[60px] border pl-[3px] font-[DejaVu_Sans_Condensed] text-[11px] outline-1 -outline-offset-2 outline-white';
  return (
    <div role="dialog" aria-label="选择" className="absolute right-[50px] top-[65px] flex h-[520px] w-[811px] flex-col border border-[#4d5358] bg-[#f0f0f0] text-black shadow-[3px_5px_16px_rgba(0,0,0,0.5)]">
      <div className="flex h-[30px] items-center justify-between bg-white pl-2 pr-[9px]">
        <span>选择</span>
        <button aria-label="关闭对话框"><S w={12} h={12} s="#111" sw={1.100}><path d="m1 1 10 10M11 1 1 11" /></S></button>
      </div>
      <div className="ml-[15px] mr-[22px] mt-[15px] flex h-[413px] items-start gap-5 border-2 border-b border-r border-b-white border-l-[#777] border-r-white border-t-[#6e6e6e] pl-[65px] pt-[10px]">
        <fieldset className="flex h-[388px] w-[376px] flex-col border border-[#dcdcdc] pl-3 pr-[17px]">
          <legend className="-ml-[6px] px-[2px] leading-[14px]">自动抓点</legend>
          <div className="flex pt-1">
            <div className="w-[167px]">
              {['原点', '圆弧中心', '端点', '交点', '中点', '象限', '点'].map((t) => <Check key={t} label={t} on />)}
            </div>
            <div className="flex-1">
              <div className="flex h-[21px] items-center justify-between"><Check label="角度" /><input aria-label="角度值" disabled defaultValue="15.0" className={field + ' border-[#ccc] bg-[#f0f0f0] text-[#777]'} /></div>
              <Check label="相切" on /><Check label="垂直" /><Check label="接近点" /><Check label="水平/垂直" on /><Check label="临时中心点" on /><Check label="网格顶点" on />
              <Check label="仅沿边缘" on className="ml-[13px] h-[23px]" />
            </div>
          </div>
          <div className="ml-[10px] mt-[5px] flex gap-[54px]">
            <button className="h-[21px] w-[108px] border border-[#adadad] bg-[#e1e1e1]">恢复默认</button>
            <button className="h-[21px] w-[108px] border border-[#adadad] bg-[#e1e1e1]">全关</button>
          </div>
          <div className="mt-[9px]"><Check label="默认为快速抓点模式" on /><Check label="启用快捷键" on /></div>
          <div className="flex justify-between">
            <div className="flex flex-col pt-1 leading-[26px]">
              <label htmlFor="mid-delay">临时中点延迟</label>
              <label htmlFor="preview">自动抓点预览</label>
              <label htmlFor="tangent" className="mt-1">切线公差</label>
              <label htmlFor="edge">曲面边缘折角</label>
            </div>
            <div className="flex flex-col items-end gap-[7px] pt-[9px]">
              <Drop id="mid-delay" value="1 秒" className="w-[120px]" />
              <Drop id="preview" value="关闭" className="w-[120px]" />
              <input id="tangent" defaultValue="0.0" className={field + ' border-[#6f6f6f] bg-[#ffff80]'} />
              <input id="edge" defaultValue="30.0" className={field + ' border-[#6f6f6f] bg-[#ffff80]'} />
            </div>
          </div>
        </fieldset>
        <fieldset className="flex h-[388px] w-[251px] flex-col border border-[#dcdcdc] pl-[6px]">
          <legend className="ml-px px-[2px] leading-[14px]">选择</legend>
          <div className="pt-px">
            <Check label="允许预选择" on className="h-[22px]" />
            <Check label="自动高亮" on className="h-[22px]" />
            <Check label="依照实体面" className="ml-[17px] h-[23px]" />
          </div>
          <Drop id="highlight-delay" value="不延迟" className="my-1 ml-[17px] w-[210px]" />
          <div className="pt-[3px]">
            {['使用辉光高亮显示', '在实体/曲面/网格上用网点状显示', '线框使用虚线显示', '层别图素自动高亮'].map((t) => <Check key={t} label={t} on className="h-[23px]" />)}
            <Check label="验证选择" className="h-[22px]" />
          </div>
          <div className="flex flex-col pl-[17px] text-[#a0a0a0]">
            <label htmlFor="delay" className="mb-[2px] leading-5">延迟</label>
            <Drop id="delay" value="1 秒" disabled className="w-[161px]" />
            <span className="ml-[10px] mt-1 leading-5">循环显示</span>
            <div className="ml-[9px] mt-[2px] text-[#777]">
              {['隐藏图素', '淡化图素'].map((t, i) => (
                <label key={t} className="flex h-4 items-center gap-[2px]"><input type="radio" name="cycle" disabled defaultChecked={i === 1} className="size-[13px] appearance-none rounded-full border border-[#c4c4c4] bg-white checked:bg-[#c4c4c4] checked:ring-2 checked:ring-inset checked:ring-white" />{t}</label>
              ))}
            </div>
            <label htmlFor="list-size" className="mb-[2px] mt-[3px] leading-5">图素列表大小</label>
            <Drop id="list-size" value="中等" disabled className="w-[161px]" />
          </div>
        </fieldset>
      </div>
      <div className="mt-[18px] flex justify-end gap-[6px] pr-[19px]">
        <button aria-label="确定" className="flex h-[27px] w-[52px] items-center justify-center border border-[#adadad] bg-[#e1e1e1] outline-1 -outline-offset-3 outline-dotted outline-black"><S w={20} h={20}><circle cx="10" cy="10" r="10" fill="#6aa892" stroke="none" /><path d="m4.500 10.500 3.500 3.500 7-8" stroke="#fff" strokeWidth="3" /></S></button>
        <button aria-label="取消" className="flex h-[27px] w-[52px] items-center justify-center border border-[#adadad] bg-[#e1e1e1]"><S w={20} h={20}><circle cx="10" cy="10" r="10" fill="#d9532f" stroke="none" /><path d="m6 5.500 8 9m0-9-8 9" stroke="#fff" strokeWidth="3.500" /></S></button>
        <button aria-label="对话框帮助" className="flex h-[27px] w-[52px] items-center justify-center border border-[#adadad] bg-[#e1e1e1]"><S w={20} h={20}><circle cx="10" cy="10" r="10" fill="#4a80bd" stroke="none" /><path d="M6.800 8c0-4 6.400-4 6.400 0 0 2.200-3.200 2-3.200 4M10 13.500V16" stroke="#fff" strokeWidth="2.500" /></S></button>
      </div>
      <div className="pointer-events-none absolute left-[466px] top-[263px] h-6 w-[135px] rounded-[2px] border-4 border-[#fb5252]" />
      <svg className="pointer-events-none absolute left-[167px] top-[280px]" width="286" height="122" viewBox="0 0 286 122" aria-hidden="true"><path d="M0 117 258 8 255 2 284 1 264 21 261 17 1 119z" fill="#fb5252" /></svg>
      <p className="pointer-events-none absolute left-[111px] top-[450px] whitespace-nowrap text-[24px] leading-8 text-[#fb5252]">这个关掉就可以标注角度了</p>
    </div>
  );
}

function Viewport() {
  return (
    <div className="flex min-w-0 flex-1 flex-col">
      <main className="relative flex-1 overflow-hidden bg-[linear-gradient(#959fa9,#a5adb7_17%,#b7bfc6_35%,#c5c9d1_46%,#c9cdd1_49%,#dadee2_66%,#eceef0_80%,#ffffff)]">
        <Drawing />
        <SelectionBar />
        <QuickMasks />
        <ViewControls />
        <div className="absolute bottom-[11px] right-[20px] w-[98px] border-x border-black">
          <div className="h-[13px] border-b border-black text-center font-[DejaVu_Sans,Noto_Sans_CJK_SC] text-[12px] font-bold leading-[12px] text-black">12.376 毫米</div>
          <div className="h-[11px]" />
        </div>
        <SelectionDialog />
      </main>
      <div className="flex h-[30px] shrink-0 items-stretch border-t border-[#999] bg-white">
        <button className="mb-[2px] w-[60px] border border-t-0 border-[#999] bg-white pt-[3px] font-bold text-black">视图单-1</button>
        <div className="mt-[3px] flex flex-1 items-center justify-between border-b border-t border-b-[#c8c8c8] border-t-[#aaa] bg-[#e6e6e6] pl-[7px] pr-[3px]">
          <button aria-label="新建视图单"><S w={9} h={9} s="#555"><path d="M4.500 1v7M1 4.500h7" /></S></button>
          <span className="flex gap-[12px]"><S w={6} h={9} s="#777"><path d="M5 .5v8l-4-4z" /></S><S w={6} h={9} s="#777"><path d="M1 .5v8l4-4z" /></S></span>
        </div>
      </div>
    </div>
  );
}

function StatusBar() {
  return (
    <footer className="relative flex h-[25px] shrink-0 items-center justify-end whitespace-nowrap bg-[#f0f0f0] pb-[2px] pr-[191px] text-[#555]">
      <span className="w-[97px]">截面视图: 关闭</span>
      <span className="w-[148px]">选择的图素: 0</span>
      <span className="w-[28px]">X:</span><span className="w-[79px]">-16.53601</span>
      <span className="w-[26px]">Y:</span><span className="w-[75px]">48.41902</span>
      <span className="flex items-center text-black">
        <span className="w-[20px]">Z:</span><span className="w-[53px]">0.00000</span><Chevron className="w-[7px]" />
        <button className="ml-[12px] w-[29px] text-left">3D</button>
        <button className="flex w-[114px] items-center gap-2">绘图平面: 俯视图<Chevron className="w-[7px]" /></button>
        <button className="flex w-[114px] items-center gap-2">刀具平面: 俯视图<Chevron className="w-[7px]" /></button>
        <button>WCS: 俯视图</button>
      </span>
      <span className="absolute right-[54px] top-[3px] h-[18px] w-[28px] border-2 border-[#2b579a] bg-[#c9ccd0]" />
      <span className="absolute right-[60px] top-1 size-4 rounded-full bg-[#b9b9b9]" />
      <span className="absolute right-[30px] top-1 size-4 rounded-full bg-[#cfcfcf]" />
      <span className="absolute right-[5px] top-1 size-4 rounded-full bg-[#cfcfcf]" />
      <span className="absolute right-[6px] top-1 flex items-center gap-2 leading-[18px] text-[#858585]">
        <span className="font-[Liberation_Serif,Noto_Sans_CJK_SC] text-[15px] italic">爱好者论坛</span>
        <span className="font-[Liberation_Mono] text-[13px]">WWW.UGSNX.COM</span>
      </span>
    </footer>
  );
}

export default function App() {
  return (
    <div className="flex h-screen min-h-[860px] min-w-[1440px] flex-col overflow-hidden bg-[#f0f0f0] font-[Open_Sans,Noto_Sans_CJK_SC,sans-serif] text-[12px] leading-4">
      <Header />
      <Ribbon />
      <div className="flex min-h-0 flex-1">
        <ToolpathPanel />
        <Viewport />
      </div>
      <StatusBar />
    </div>
  );
}
